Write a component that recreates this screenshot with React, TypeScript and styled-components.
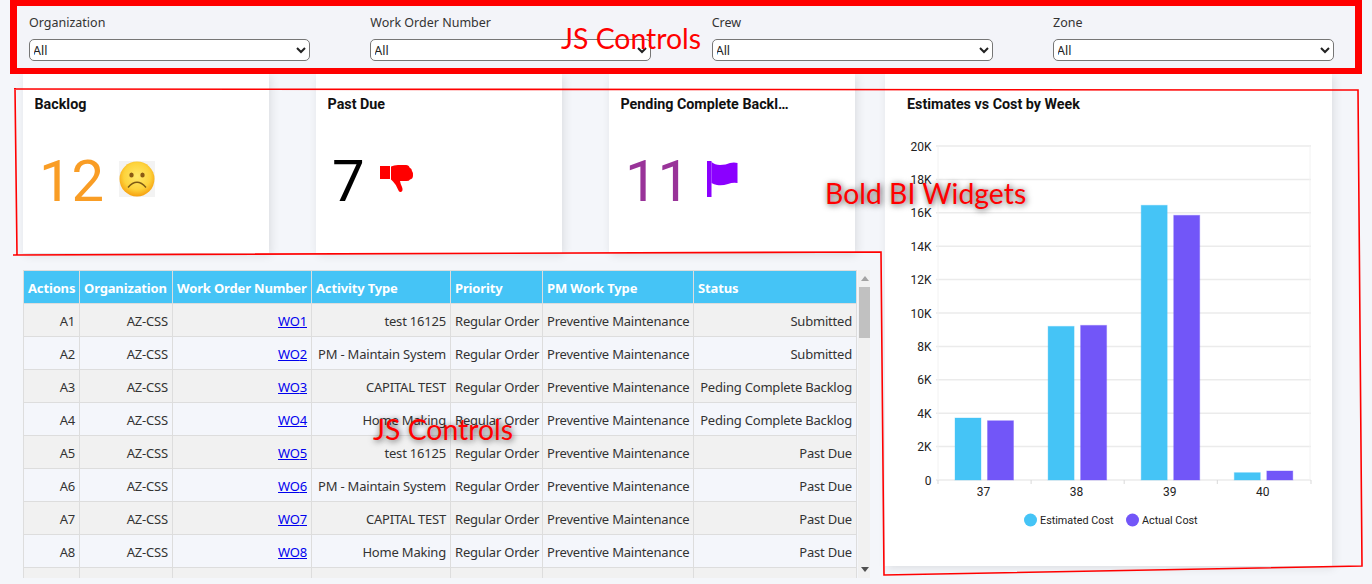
import styled, { createGlobalStyle } from 'styled-components';

const GlobalStyle = createGlobalStyle`
  html, body {
    margin: 0;
    padding: 0;
    height: 584px;
    overflow: hidden;
    background: #f4f6fa;
  }
`;

const BODY_FONT = `"Noto Sans", "Open Sans", sans-serif`;
const WIDGET_FONT = `Roboto, "Liberation Sans", sans-serif`;

const filters = ['Organization', 'Work Order Number', 'Crew', 'Zone'];

const activities = ['test 16125', 'PM - Maintain System', 'CAPITAL TEST', 'Home Making'];
const statuses = [
  'Submitted',
  'Submitted',
  'Peding Complete Backlog',
  'Peding Complete Backlog',
  'Past Due',
  'Past Due',
  'Past Due',
  'Past Due',
];

const columns = [
  { title: 'Actions', width: 56 },
  { title: 'Organization', width: 93 },
  { title: 'Work Order Number', width: 139 },
  { title: 'Activity Type', width: 139 },
  { title: 'Priority', width: 92 },
  { title: 'PM Work Type', width: 151 },
  { title: 'Status', width: 163 },
];

const weeks = [
  { label: '37', estimated: 3712, actual: 3550 },
  { label: '38', estimated: 9200, actual: 9260 },
  { label: '39', estimated: 16450, actual: 15850 },
  { label: '40', estimated: 440, actual: 540 },
];

const yTicks = [0, 2, 4, 6, 8, 10, 12, 14, 16, 18, 20];

const PLOT_LEFT = 53;
const PLOT_RIGHT = 426;
const PLOT_TOP = 16;
const PLOT_BOTTOM = 350;
const WEEK_WIDTH = 93.1;
const ESTIMATED = '#45c4f6';
const ACTUAL = '#7256f8';

const valueToY = (value: number) => PLOT_BOTTOM - (value / 20000) * (PLOT_BOTTOM - PLOT_TOP);

function SadFace() {
  return (
    <svg width="36" height="36" viewBox="0 0 36 36">
      <defs>
        <radialGradient id="faceFill" cx="50%" cy="42%" r="58%">
          <stop offset="0%" stopColor="#ffe86a" />
          <stop offset="65%" stopColor="#fdd33c" />
          <stop offset="100%" stopColor="#f6a00f" />
        </radialGradient>
      </defs>
      <rect width="36" height="36" fill="#f3f3f3" />
      <circle cx="18" cy="18" r="17.5" fill="url(#faceFill)" />
      <ellipse cx="12.5" cy="14" rx="2.2" ry="2.6" fill="#8a5a14" />
      <ellipse cx="23.5" cy="14" rx="2.2" ry="2.6" fill="#8a5a14" />
      <path d="M9 26.5 Q18 16 27 26.5" fill="none" stroke="#7d5a14" strokeWidth="1.4" />
    </svg>
  );
}

function ThumbDown() {
  return (
    <svg width="34" height="28" viewBox="0 0 34 28">
      <rect x="0" y="1" width="10" height="13" fill="#ff0000" />
      <path
        d="M11 1.5 Q14 0 18 0 L26 0 Q29 0 29.5 2.5 Q32 3.5 32 6 Q33.5 8 33 10.5 Q33 14 30 14.5 Q29 16.5 25 16 L20 16 Q20.5 19 22 22 Q23.5 26 21 27 Q19 27.5 18 24.5 Q16.5 20 13 16.5 L11 14.5 Z"
        fill="#ff0000"
      />
    </svg>
  );
}

function Flag() {
  return (
    <svg width="33" height="36" viewBox="0 0 33 36">
      <rect x="2" y="0" width="4.5" height="36" fill="#8b00ff" />
      <path
        d="M6.5 1 Q10 4 15 4 Q21 4 25 2 Q29 1 32.5 2 L32.5 22 Q28 21 23 23 Q17 25 12 24 Q9 23.5 6.5 22 Z"
        fill="#8b00ff"
      />
    </svg>
  );
}

function CostChart() {
  return (
    <ChartSvg width="447" height="420" viewBox="0 0 447 420">
      {yTicks.map((tick) => {
        const y = valueToY(tick * 1000);
        return (
          <g key={tick}>
            <line x1={PLOT_LEFT - 2} x2={PLOT_RIGHT} y1={y} y2={y} stroke="#ebebeb" strokeWidth="1.5" />
            <text x="46.5" y={y + 4.5} textAnchor="end" fontSize="12" fill="#222">
              {tick === 0 ? '0' : `${tick}K`}
            </text>
          </g>
        );
      })}
      <line x1={PLOT_LEFT} x2={PLOT_LEFT} y1={PLOT_TOP} y2={PLOT_BOTTOM} stroke="#f2f2f2" />
      <line x1={PLOT_RIGHT - 1} x2={PLOT_RIGHT - 1} y1={PLOT_TOP} y2={PLOT_BOTTOM} stroke="#f2f2f2" />
      {weeks.map((week, index) => {
        const left = PLOT_LEFT + index * WEEK_WIDTH;
        return (
          <g key={week.label}>
            <line x1={left} x2={left} y1={PLOT_BOTTOM} y2={PLOT_BOTTOM + 4} stroke="#d9d9d9" />
            <rect
              x={left + 17}
              y={valueToY(week.estimated)}
              width="26"
              height={PLOT_BOTTOM - valueToY(week.estimated)}
              fill={ESTIMATED}
              stroke={ESTIMATED}
              strokeOpacity="0.35"
            />
            <rect
              x={left + 49.5}
              y={valueToY(week.actual)}
              width="26"
              height={PLOT_BOTTOM - valueToY(week.actual)}
              fill={ACTUAL}
              stroke={ACTUAL}
              strokeOpacity="0.35"
            />
            <text x={left + 45.5} y={PLOT_BOTTOM + 16} textAnchor="middle" fontSize="12" fill="#222">
              {week.label}
            </text>
          </g>
        );
      })}
      <line x1={PLOT_RIGHT} x2={PLOT_RIGHT} y1={PLOT_BOTTOM} y2={PLOT_BOTTOM + 4} stroke="#d9d9d9" />
      <circle cx="145.5" cy="390" r="6.5" fill={ESTIMATED} />
      <text x="155" y="394" fontSize="10.8" fill="#222">
        Estimated Cost
      </text>
      <circle cx="247.5" cy="390" r="6.5" fill={ACTUAL} />
      <text x="257" y="394" fontSize="10.8" fill="#222">
        Actual Cost
      </text>
    </ChartSvg>
  );
}

export default function App() {
  return (
    <Page>
      <GlobalStyle />

      <FilterBar>
        {filters.map((name) => (
          <Filter key={name}>
            <FilterLabel>{name}</FilterLabel>
            <FilterSelect defaultValue="All">
              <option>All</option>
            </FilterSelect>
          </Filter>
        ))}
      </FilterBar>

      <Content>
        <LeftColumn>
          <KpiRow>
            <KpiCard>
              <CardTitle>Backlog</CardTitle>
              <KpiBody>
                <KpiValue color="#f99d25">12</KpiValue>
                <SadFace />
              </KpiBody>
            </KpiCard>
            <KpiCard>
              <CardTitle>Past Due</CardTitle>
              <KpiBody>
                <KpiValue color="#000000">7</KpiValue>
                <ThumbDown />
              </KpiBody>
            </KpiCard>
            <KpiCard>
              <CardTitle>Pending Complete Backlog</CardTitle>
              <KpiBody>
                <KpiValue color="#993399">11</KpiValue>
                <Flag />
              </KpiBody>
            </KpiCard>
          </KpiRow>

          <TablePanel>
            <OrdersTable>
              <colgroup>
                {columns.map((column) => (
                  <col key={column.title} width={column.width} />
                ))}
              </colgroup>
              <thead>
                <tr>
                  {columns.map((column) => (
                    <HeadCell key={column.title}>{column.title}</HeadCell>
                  ))}
                </tr>
              </thead>
              <tbody>
                {statuses.map((status, index) => (
                  <BodyRow key={index}>
                    <BodyCell>A{index + 1}</BodyCell>
                    <BodyCell>AZ-CSS</BodyCell>
                    <BodyCell>
                      <OrderLink href="#">WO{index + 1}</OrderLink>
                    </BodyCell>
                    <BodyCell>{activities[index % 4]}</BodyCell>
                    <BodyCell>Regular Order</BodyCell>
                    <BodyCell>Preventive Maintenance</BodyCell>
                    <BodyCell>{status}</BodyCell>
                  </BodyRow>
                ))}
                <BodyRow>
                  {columns.map((column) => (
                    <BodyCell key={column.title} />
                  ))}
                </BodyRow>
              </tbody>
            </OrdersTable>
            <Scrollbar>
              <ArrowUp />
              <ScrollTrack>
                <ScrollThumb />
              </ScrollTrack>
              <ArrowDown />
            </Scrollbar>
          </TablePanel>
        </LeftColumn>

        <ChartCard>
          <ChartTitle>Estimates vs Cost by Week</ChartTitle>
          <CostChart />
        </ChartCard>
      </Content>

      <Markup width="1372" height="584" viewBox="0 0 1372 584">
        <path
          d="M14 89 L1358 90 L1362 566 L884 575 L881 252 L13 255 M15 88 L17 255"
          fill="none"
          stroke="#ff0000"
          strokeWidth="1.6"
        />
      </Markup>
      <TopNote>JS Controls</TopNote>
      <WidgetNote>Bold BI Widgets</WidgetNote>
      <TableNote>JS Controls</TableNote>
    </Page>
  );
}

const Page = styled.div`
  position: relative;
  width: 1372px;
  height: 584px;
  overflow: hidden;
  background: #f4f6fa;
`;

const FilterBar = styled.div`
  position: relative;
  z-index: 1;
  box-sizing: border-box;
  width: 1352px;
  height: 74px;
  margin-left: 10px;
  padding: 7px 0 0 12px;
  border: 7px solid #ff0000;
  border-top-width: 6px;
  border-bottom-width: 6px;
  display: grid;
  grid-template-columns: repeat(4, 341.33px);
  background: #f3f4f9;
`;

const Filter = styled.div`
  display: flex;
  flex-direction: column;
  align-items: flex-start;
`;

const FilterLabel = styled.label`
  height: 19px;
  margin-bottom: 7px;
  font: 12.5px/19px ${BODY_FONT};
  color: #333;
`;

const FilterSelect = styled.select`
  box-sizing: border-box;
  width: 281px;
  height: 22px;
  padding: 0;
  border: 1px solid #767676;
  border-radius: 5px;
  background-color: #fff;
  text-indent: -1px;
  font: 12.5px ${BODY_FONT};
  color: #222;
`;

const Content = styled.div`
  display: flex;
  align-items: flex-start;
  padding-left: 23px;
`;

const LeftColumn = styled.div`
  width: 834px;
  display: flex;
  flex-direction: column;
`;

const KpiRow = styled.div`
  display: flex;
  gap: 47px;
`;

const KpiCard = styled.section`
  box-sizing: border-box;
  width: 246px;
  height: 179px;
  padding: 22px 11.5px 0;
  background: #fff;
  box-shadow: 2px 2px 9px rgba(0, 0, 0, 0.1);
`;

const CardTitle = styled.h3`
  margin: 0;
  max-width: 169px;
  overflow: hidden;
  white-space: nowrap;
  text-overflow: ellipsis;
  font: 700 14.3px/17px ${WIDGET_FONT};
  color: #111;
`;

const KpiBody = styled.div`
  display: flex;
  align-items: center;
  gap: 15px;
  margin-top: 29px;
  padding-left: 4.5px;
`;

const KpiValue = styled.span<{ color: string }>`
  margin-top: 4px;
  font: 400 58px/70px ${WIDGET_FONT};
  color: ${(props) => props.color};
`;

const TablePanel = styled.div`
  display: flex;
  width: 847px;
  height: 308px;
  margin-top: 17px;
  overflow: hidden;
`;

const OrdersTable = styled.table`
  width: 833px;
  flex: none;
  align-self: flex-start;
  table-layout: fixed;
  border-collapse: collapse;
`;

const HeadCell = styled.th`
  height: 33px;
  padding: 2px 4px 0;
  box-sizing: border-box;
  border: 1px solid #dddddd;
  background: #45c4f6;
  color: #fff;
  text-align: left;
  white-space: nowrap;
  overflow: hidden;
  letter-spacing: -0.15px;
  font: 700 13px ${BODY_FONT};
`;

const BodyRow = styled.tr`
  background: #f4f6fb;

  &:nth-child(odd) {
    background: #f1f1f1;
  }
`;

const BodyCell = styled.td`
  height: 33px;
  padding: 2px 4px 0;
  box-sizing: border-box;
  border: 1px solid #dddddd;
  text-align: right;
  white-space: nowrap;
  overflow: hidden;
  letter-spacing: -0.2px;
  font: 13px ${BODY_FONT};
  color: #333;
`;

const OrderLink = styled.a`
  color: #0000ee;
`;

const Scrollbar = styled.div`
  width: 13px;
  margin-left: 1px;
  flex: none;
  display: flex;
  flex-direction: column;
  align-items: center;
  background: #f1f1f1;
`;

const ArrowUp = styled.div`
  flex: none;
  margin: 6px 0 5px;
  border: 4px solid transparent;
  border-top: 0;
  border-bottom: 5px solid #a3a3a3;
`;

const ArrowDown = styled.div`
  flex: none;
  margin: 5px 0 6px;
  border: 4px solid transparent;
  border-bottom: 0;
  border-top: 5px solid #505050;
`;

const ScrollTrack = styled.div`
  flex: 1;
  width: 100%;
`;

const ScrollThumb = styled.div`
  width: 11px;
  height: 51px;
  margin: 1px auto 0;
  background: #c1c1c1;
`;

const ChartCard = styled.section`
  box-sizing: border-box;
  width: 447px;
  height: 492px;
  margin-left: 28px;
  padding-top: 22px;
  background: #fff;
  box-shadow: 2px 2px 9px rgba(0, 0, 0, 0.1);
`;

const ChartTitle = styled(CardTitle)`
  max-width: none;
  padding-left: 22px;
`;

const ChartSvg = styled.svg`
  display: block;
  margin-top: 17px;
  font-family: ${WIDGET_FONT};
`;

const Markup = styled.svg`
  position: absolute;
  z-index: 2;
  top: 0;
  left: 0;
  pointer-events: none;
`;

const Note = styled.span`
  position: absolute;
  z-index: 3;
  font: 400 28.4px/36px Lato, sans-serif;
  color: #ff0000;
  white-space: nowrap;
`;

const TopNote = styled(Note)`
  top: 20px;
  left: 561px;
`;

const WidgetNote = styled(Note)`
  top: 175px;
  left: 825px;
  text-shadow: 1px 1px 6px rgba(0, 0, 0, 0.75);
`;

const TableNote = styled(Note)`
  top: 411px;
  left: 373px;
  text-shadow: 1px 1px 6px rgba(0, 0, 0, 0.75);
`;
